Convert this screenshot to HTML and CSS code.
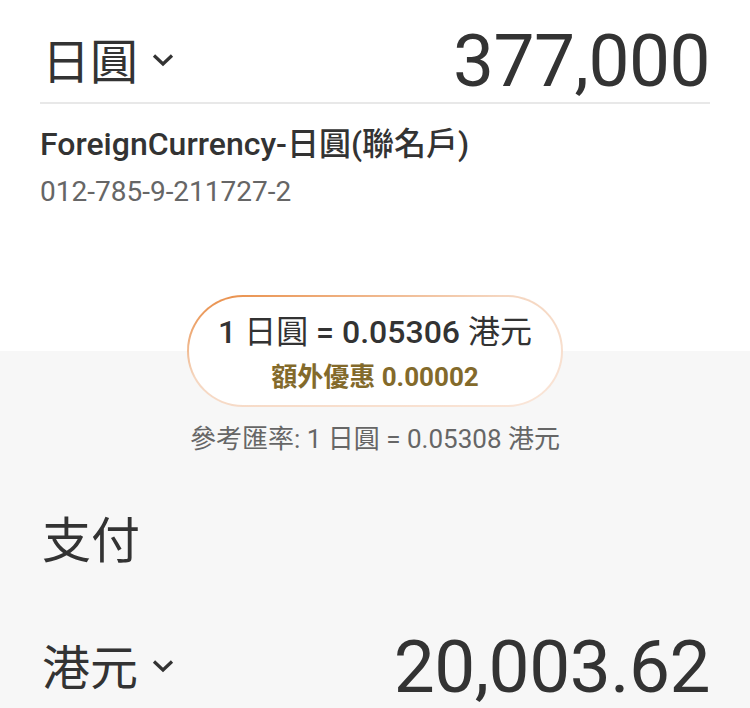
FILE: index.html
```html
<!DOCTYPE html>
<html lang="zh-Hant">
<head>
    <meta charset="UTF-8">
    <meta name="viewport" content="width=device-width, initial-scale=1.0">
    <title>換匯</title>
    <link rel="stylesheet" href="styles.css">
</head>
<body>
    <!-- 收取 -->
    <div class="receive-section">
        <div class="currency-row underline">
            <div class="currency-picker">
                <span class="currency-name">日圓</span>
                <svg class="chevron" width="22" height="14" viewBox="0 0 22 14"><path d="M2 2.5 L11 11 L20 2.5" fill="none" stroke="#333" stroke-width="3.2"/></svg>
            </div>
            <div class="amount">377,000</div>
        </div>
        <div class="account-name">ForeignCurrency-日圓(聯名戶)</div>
        <div class="account-no">012-785-9-211727-2</div>
    </div>

    <!-- 匯率 -->
    <div class="rate-wrapper">
        <div class="rate-pill">
            <div class="rate-main"><b>1</b> 日圓 <b>= 0.05306</b> 港元</div>
            <div class="rate-bonus">額外優惠 0.00002</div>
        </div>
    </div>

    <div class="pay-section">
        <div class="ref-rate">參考匯率: 1 日圓 = 0.05308 港元</div>
        <div class="pay-title">支付</div>
        <div class="currency-row">
            <div class="currency-picker">
                <span class="currency-name">港元</span>
                <svg class="chevron" width="22" height="14" viewBox="0 0 22 14"><path d="M2 2.5 L11 11 L20 2.5" fill="none" stroke="#333" stroke-width="3.2"/></svg>
            </div>
            <div class="amount pay-amount">20,003.62</div>
        </div>
    </div>
</body>
</html>
```

FILE: styles.css
```css
body {
    margin: 0;
    font-family: Roboto, "Noto Sans CJK TC", sans-serif;
    color: #333;
    background-color: #f7f7f7;
}
.receive-section {
    background-color: #fff;
    padding: 0 40px;
    height: 295px;
    box-sizing: border-box;
}
.currency-row {
    display: flex;
    justify-content: space-between;
    align-items: flex-start;
}
.underline {
    height: 104px;
    border-bottom: 2px solid #e8e8e8;
    box-sizing: border-box;
}
.currency-picker {
    display: flex;
    align-items: center;
    margin-top: 28px;
    padding-left: 2px;
}
.currency-name {
    font-family: "Noto Sans CJK TC", sans-serif;
    font-size: 48px;
    line-height: 60px;
}
.chevron {
    margin-left: 14px;
    margin-top: 4px;
}
.amount {
    margin-top: 21px;
    font-size: 73px;
    line-height: 80px;
    letter-spacing: -0.5px;
}
.account-name {
    margin-top: 21px;
    font-size: 32px;
    font-weight: 500;
    line-height: 38px;
}
.account-no {
    margin-top: 12px;
    font-size: 28px;
    line-height: 34px;
    color: #666;
}
/* 匯率框跨越白色與灰色區塊 */
.rate-wrapper {
    display: flex;
    justify-content: center;
    background: linear-gradient(#fff 50%, #f7f7f7 50%);
}
.rate-pill {
    width: 376px;
    height: 112px;
    box-sizing: border-box;
    border: 2px solid transparent;
    border-radius: 56px;
    background: linear-gradient(#fff, #fff) padding-box,
                linear-gradient(165deg, #e8873c 0%, #f5d6c0 40%, #fae6d9 100%) border-box;
    text-align: center;
    padding-top: 15px;
}
.rate-main {
    font-size: 32px;
    line-height: 40px;
}
.rate-main b {
    font-weight: 500;
}
.rate-bonus {
    margin-top: 10px;
    font-size: 26px;
    line-height: 30px;
    font-weight: 700;
    color: #836a2b;
}
.pay-section {
    padding: 0 40px;
}
.ref-rate {
    margin-top: 17px;
    text-align: center;
    font-size: 26px;
    line-height: 30px;
    color: #666;
}
.pay-title {
    margin-top: 53px;
    font-family: "Noto Sans CJK TC", sans-serif;
    font-size: 49px;
    line-height: 60px;
    padding-left: 2px;
}
.pay-section .currency-row {
    margin-top: 64px;
}
.pay-section .currency-picker {
    margin-top: 3px;
}
.pay-amount {
    margin-top: 0;
    line-height: 72px;
}
```
